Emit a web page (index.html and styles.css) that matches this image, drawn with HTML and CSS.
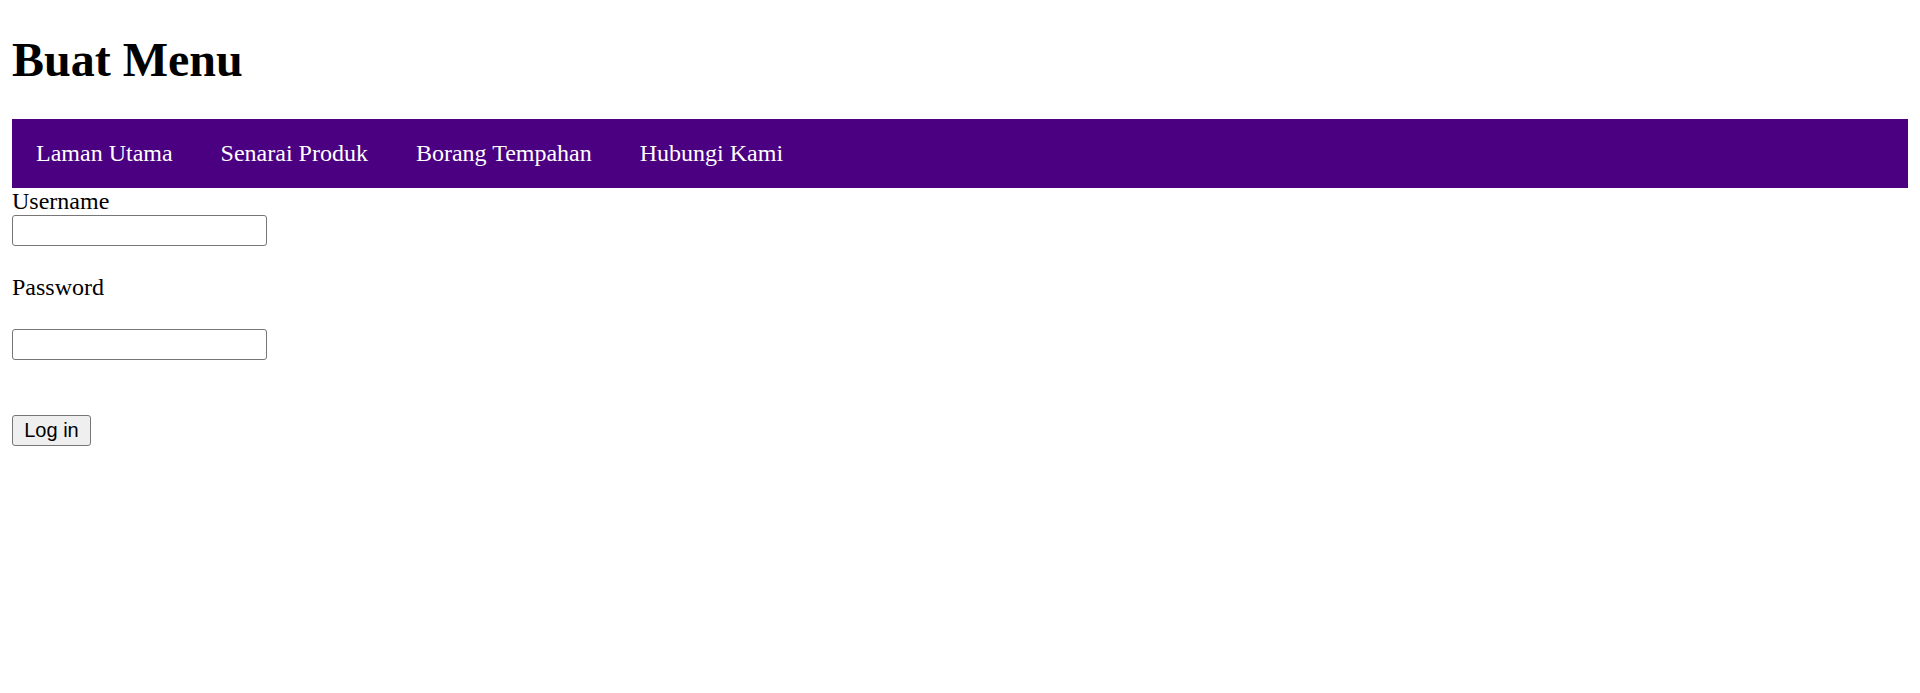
FILE: index.html
```html
<!DOCTYPE html>
<html lang="ms">
<head>
<meta charset="utf-8">
<title>Buat Menu</title>
<link rel="stylesheet" href="styles.css">
</head>
<body>
<h1 class="title">Buat Menu</h1>
<nav class="navbar">
  <a class="nav-link" href="#">Laman Utama</a>
  <a class="nav-link" href="#">Senarai Produk</a>
  <a class="nav-link" href="#">Borang Tempahan</a>
  <a class="nav-link" href="#">Hubungi Kami</a>
</nav>
<form class="login">
  <label class="field-label" for="username">Username</label>
  <input class="field-input" id="username" type="text">
  <label class="field-label field-label-gap" for="password">Password</label>
  <input class="field-input field-input-gap" id="password" type="password">
  <button class="login-button" type="button">Log in</button>
</form>
</body>
</html>
```

FILE: styles.css
```css
html, body {
  background: #ffffff;
}

body {
  margin: 0 12px 12px;
  font-family: "Liberation Serif", "Times New Roman", serif;
  font-size: 24px;
  color: #000000;
}

.title {
  margin: 0 0 32px;
  padding-top: 32px;
  font-size: 48px;
  font-weight: bold;
  line-height: 55px;
}

.navbar {
  display: flex;
  background: #4b0082;
}

.nav-link {
  display: block;
  padding: 21px 24px;
  font-size: 24px;
  line-height: 26.7px;
  color: #ffffff;
  text-decoration: none;
}

.login {
  display: flex;
  flex-direction: column;
  align-items: flex-start;
}

.field-label {
  font-size: 24px;
  line-height: 27.5px;
}

.field-label-gap {
  margin-top: 28px;
}

.field-input {
  box-sizing: border-box;
  width: 255px;
  height: 31px;
  margin: 0;
  padding: 1px 3px;
  border: 1px solid #767676;
  border-radius: 3px;
  background: #ffffff;
  font-family: "Liberation Sans", Arial, sans-serif;
  font-size: 20px;
}

.field-input-gap {
  margin-top: 27px;
}

.login-button {
  box-sizing: border-box;
  margin: 55px 0 0;
  width: 79px;
  height: 31px;
  padding: 0 9px;
  border: 1px solid #767676;
  border-radius: 3px;
  background: #efefef;
  font-family: "Liberation Sans", Arial, sans-serif;
  font-size: 20px;
  color: #000000;
}
```
